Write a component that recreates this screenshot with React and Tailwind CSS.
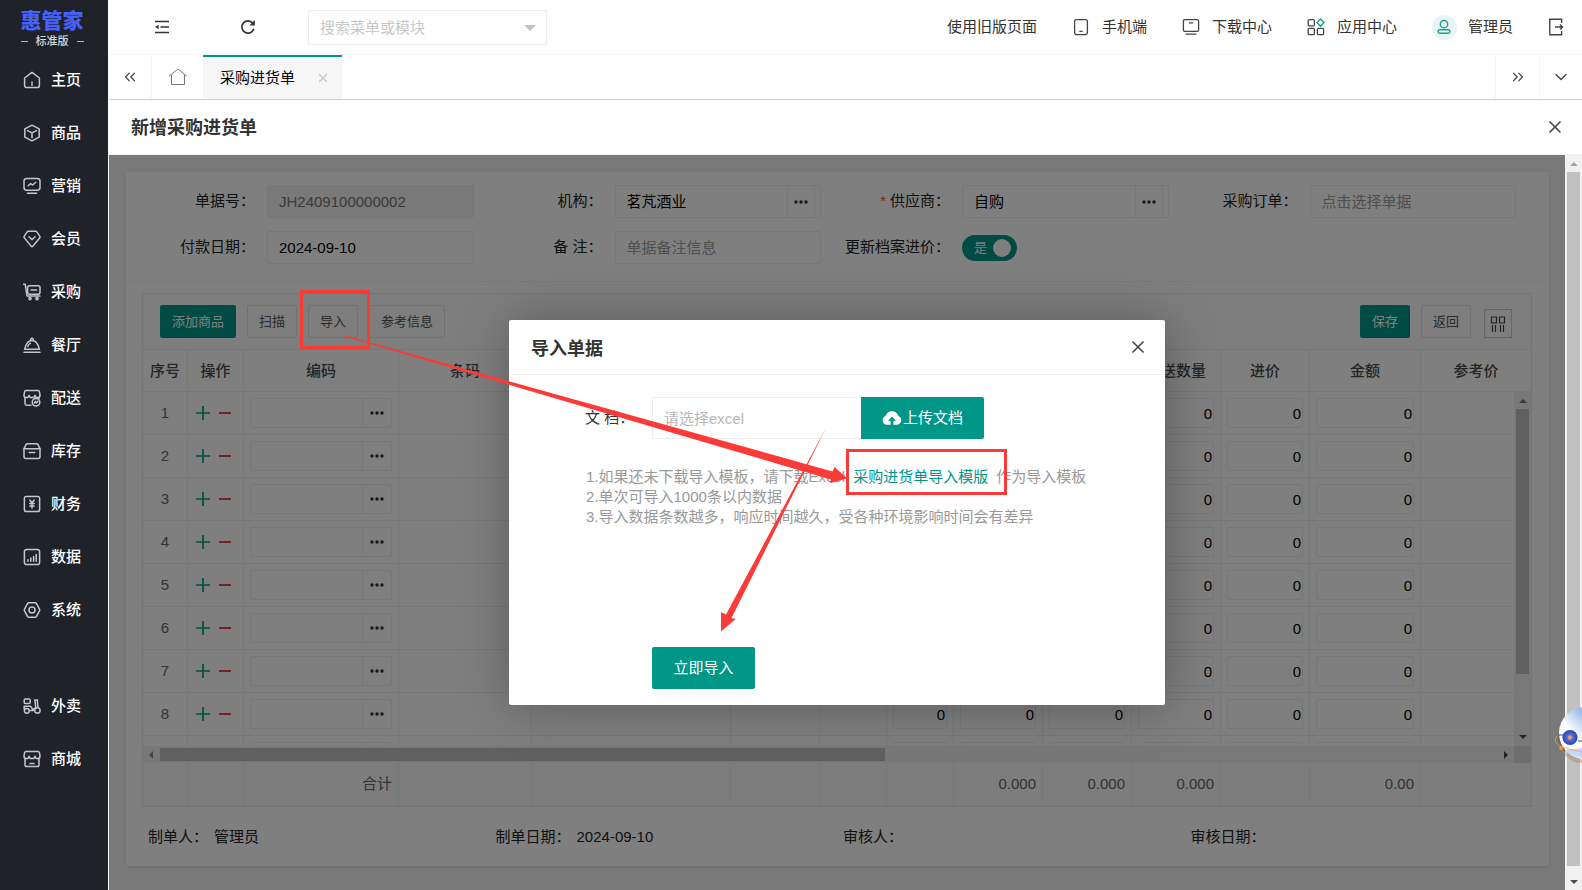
import { useState } from 'react';
import { X, ChevronsLeft, ChevronsRight, ChevronDown } from 'lucide-react';

const menuIcons = {
    home: (
        <>
            <path d="M9 1.4L16.4 7v7.4a2.2 2.2 0 0 1-2.2 2.2H3.8a2.2 2.2 0 0 1-2.2-2.2V7z" />
            <path d="M9 11v3.2" />
        </>
    ),
    goods: (
        <>
            <path d="M9 1.2l7.2 3.7v8.2L9 16.8l-7.2-3.7V4.9z" />
            <path d="M4.6 6.6L9 8.8l4.4-2.2M9 8.8v5" />
        </>
    ),
    marketing: (
        <>
            <rect x="1" y="1.4" width="16" height="11.8" rx="2.6" />
            <path d="M5.2 8.8l2.4-2.2 2 1.4 3.2-2.8M4.4 16.2h9.2" />
        </>
    ),
    member: (
        <>
            <path d="M5.4 1.2h7.2a1.5 1.5 0 0 1 1.2.6l2.9 4.3a1.5 1.5 0 0 1-.1 1.8L9.8 16.3a1 1 0 0 1-1.6 0L1.4 7.9a1.5 1.5 0 0 1-.1-1.8l2.9-4.3a1.5 1.5 0 0 1 1.2-.6z" />
            <path d="M6 6.8l3 3 3-3" />
        </>
    ),
    purchase: (
        <>
            <path d="M.6 1.2h1.6L4 13h13" />
            <rect x="4.6" y="2.8" width="12.4" height="8.4" rx="2" />
            <path d="M8 7h5.6" />
            <circle cx="7" cy="15.6" r="1.1" />
            <circle cx="14" cy="15.6" r="1.1" />
        </>
    ),
    dining: (
        <>
            <path d="M1.6 13.2C3 7.4 5.4 4.4 9 4.4s6 3 7.4 8.8z" />
            <path d="M1 16.2h16M7.8 4a1.3 1.3 0 1 1 2.4 0M4.8 10.4c.6-1.6 1.4-2.6 2.6-3.2" />
        </>
    ),
    delivery: (
        <>
            <path d="M8 16.2H3.6a1.6 1.6 0 0 1-1.6-1.6V8.6M16 8.6v.8" />
            <path d="M3 1.4h12a1.4 1.4 0 0 1 1.4 1.2l.6 3.6c0 1.4-.9 2.4-2.3 2.4s-2.7-1-2.7-2.4c0 1.4-1.4 2.4-3 2.4S6 7.6 6 6.2C6 7.6 4.7 8.6 3.3 8.6S1 7.6 1 6.2l.6-3.6A1.4 1.4 0 0 1 3 1.4z" />
            <circle cx="13" cy="13.2" r="3.8" />
            <path d="M11.2 14l1.4-1.6.8 1.6 1.4-1.6" />
        </>
    ),
    stock: (
        <>
            <path d="M4.4 1.8h9.2a1.6 1.6 0 0 1 1.4.9L17 6.6v8a1.8 1.8 0 0 1-1.8 1.8H2.8A1.8 1.8 0 0 1 1 14.6v-8l2-3.9a1.6 1.6 0 0 1 1.4-.9z" />
            <path d="M1 6.8h16M6.2 10.6h5.6" />
        </>
    ),
    finance: (
        <>
            <rect x="1.4" y="1.4" width="15.2" height="15.2" rx="1.8" />
            <path d="M6.8 5l2.2 3 2.2-3M9 8v5M6.8 8.6h4.4M6.8 10.9h4.4" />
        </>
    ),
    data: (
        <>
            <rect x="1.4" y="1.4" width="15.2" height="15.2" rx="2.4" />
            <path d="M5 11.8v1.4M7.8 10v3.2M10.6 8.4v4.8M13.2 6.4v6.8" />
        </>
    ),
    system: (
        <>
            <path d="M5.6 1.8h6.8a1.2 1.2 0 0 1 1 .6l3.2 6a1.2 1.2 0 0 1 0 1.2l-3.2 6a1.2 1.2 0 0 1-1 .6H5.6a1.2 1.2 0 0 1-1-.6l-3.2-6a1.2 1.2 0 0 1 0-1.2l3.2-6a1.2 1.2 0 0 1 1-.6z" />
            <circle cx="9" cy="9" r="3" />
        </>
    ),
    takeout: (
        <>
            <rect x="1.2" y="2" width="6" height="4.4" rx="1.2" />
            <path d="M1 9.2h6.6l2.4 3.6 2.8-2.6-1-7.2h2.8M7 13.4h3.4M14.2 3l.8 7M1.2 9.2v3" />
            <circle cx="3.8" cy="13.8" r="2.4" />
            <circle cx="14.4" cy="13.4" r="2.7" />
        </>
    ),
    mall: (
        <>
            <path d="M2 8.4v6.4a1.8 1.8 0 0 0 1.8 1.8h10.4a1.8 1.8 0 0 0 1.8-1.8V8.4" />
            <path d="M3 1.4h12a1.4 1.4 0 0 1 1.4 1.2l.6 3.6c0 1.4-.9 2.4-2.3 2.4S12 7.6 12 6.2c0 1.4-1.4 2.4-3 2.4S6 7.6 6 6.2c0 1.4-1.3 2.4-2.7 2.4S1 7.6 1 6.2l.6-3.6A1.4 1.4 0 0 1 3 1.4z" />
            <path d="M7 13.4h4" />
        </>
    ),
};

const mainMenu = [
    { label: '主页', icon: 'home' },
    { label: '商品', icon: 'goods' },
    { label: '营销', icon: 'marketing' },
    { label: '会员', icon: 'member' },
    { label: '采购', icon: 'purchase' },
    { label: '餐厅', icon: 'dining' },
    { label: '配送', icon: 'delivery' },
    { label: '库存', icon: 'stock' },
    { label: '财务', icon: 'finance' },
    { label: '数据', icon: 'data' },
    { label: '系统', icon: 'system' },
];

const extraMenu = [
    { label: '外卖', icon: 'takeout' },
    { label: '商城', icon: 'mall' },
];

const MenuItem = ({ item }) => (
    <li>
        <a href="#" className="flex h-[53px] items-center gap-[10px] pl-[23px] font-medium text-white">
            <svg viewBox="0 0 18 18" className="h-[18px] w-[18px]" fill="none" stroke="#c4c6cb" strokeWidth="1.5" strokeLinecap="round" strokeLinejoin="round">
                {menuIcons[item.icon]}
            </svg>
            {item.label}
        </a>
    </li>
);

const Sidebar = () => (
    <aside className="w-[108px] shrink-0 overflow-hidden bg-[#20222a]">
        <div className="flex h-[53px] flex-col items-center pt-[10px] pr-[4px]">
            <div className="text-[21px] leading-[22px] font-black text-[#4561f8]">惠管家</div>
            <div className="mt-[2px] flex items-center gap-2 text-[11px] leading-[14px] font-medium text-[#d5d6d8]">
                <span className="h-px w-[7px] bg-[#b5b6b9]" />
                标准版
                <span className="h-px w-[7px] bg-[#b5b6b9]" />
            </div>
        </div>
        <nav>
            <ul>{mainMenu.map((item) => <MenuItem key={item.label} item={item} />)}</ul>
            <ul className="mt-[43px]">{extraMenu.map((item) => <MenuItem key={item.label} item={item} />)}</ul>
        </nav>
    </aside>
);

const TopBar = () => (
    <header className="flex h-[55px] items-center border-b border-[#f6f6f6] pr-[18px] text-[#333]">
        <button aria-label="折叠菜单" className="ml-[45px]">
            <svg viewBox="0 0 16 16" className="h-4 w-4" fill="none" stroke="#333" strokeWidth="1.5">
                <path d="M1 2.5h14M6.5 8H15M1 13.5h14" />
                <path d="M1 8l3.600-2.200v4.400z" fill="#333" stroke="none" />
            </svg>
        </button>
        <button aria-label="刷新" className="ml-[70px]">
            <svg viewBox="0 0 16 16" className="h-4 w-4" fill="none" stroke="#333" strokeWidth="1.7">
                <path d="M13.8 9.8A6.1 6.1 0 1 1 13 4.600" />
                <path d="M14.8 1v5.4H9.4z" fill="#333" stroke="none" />
            </svg>
        </button>
        <div className="relative ml-[52px] w-[239px]">
            <input aria-label="搜索菜单或模块" placeholder="搜索菜单或模块" className="h-[35px] w-full border border-[#eee] pl-[11px] outline-none placeholder:text-[#c8c8c8]" />
            <span className="absolute top-[15px] right-[11px] border-x-[6px] border-t-[6px] border-x-transparent border-t-[#c2c2c2]" />
        </div>
        <div className="ml-auto flex items-center gap-[35px]">
            <a href="#">使用旧版页面</a>
            <a href="#" className="flex items-center gap-3">
                <svg viewBox="0 0 18 18" className="h-[18px] w-[18px]" fill="none" stroke="#444" strokeWidth="1.3">
                    <rect x="2.6" y="1.6" width="12.8" height="15" rx="1.8" />
                    <path d="M7.4 13.4h3.2" />
                </svg>
                手机端
            </a>
            <a href="#" className="flex items-center gap-3">
                <svg viewBox="0 0 18 18" className="h-[18px] w-[18px]" fill="none" stroke="#444" strokeWidth="1.3">
                    <rect x="1.4" y="1.6" width="15.2" height="11.8" rx="1.6" />
                    <path d="M7 4.8h4M3.6 16.2h10.8" />
                </svg>
                下载中心
            </a>
            <a href="#" className="flex items-center gap-3">
                <svg viewBox="0 0 18 18" className="h-[18px] w-[18px]" fill="none" stroke="#444" strokeWidth="1.3">
                    <rect x="1.2" y="1.6" width="6.2" height="6.2" rx="1.2" />
                    <rect x="1.2" y="10.4" width="6.2" height="6.2" rx="1.2" />
                    <rect x="10.4" y="10.4" width="6.2" height="6.2" rx="1.2" />
                    <path d="M13.5 1l3.500 3.600-3.500 3.600L10 4.600z" stroke="#009688" strokeLinejoin="round" />
                </svg>
                应用中心
            </a>
            <a href="#" className="flex items-center gap-[11px]">
                <span className="flex h-[25px] w-[25px] items-center justify-center rounded-full bg-[#e9f5f4]">
                    <svg viewBox="0 0 16 16" className="h-4 w-4" fill="none" stroke="#1fa093" strokeWidth="1.4">
                        <circle cx="8" cy="5.2" r="3.7" />
                        <rect x="2" y="10.8" width="12" height="3.4" rx="1.7" />
                    </svg>
                </span>
                管理员
            </a>
            <button aria-label="退出">
                <svg viewBox="0 0 16 20" className="h-5 w-4" fill="none" stroke="#444" strokeWidth="1.4">
                    <path d="M13.6 6V2.2H1.8v15.6h11.8V14M7 10h7.4M12 7.4l2.600 2.600-2.600 2.600" />
                </svg>
            </button>
        </div>
    </header>
);

const TabBar = () => (
    <div className="relative z-10 flex h-[44px] bg-white shadow-[0_1px_1px_rgba(0,0,0,0.18)]">
        <button aria-label="向左滚动" className="flex w-[43px] items-center justify-center border-r border-[#f6f6f6]">
            <ChevronsLeft className="h-[18px] w-[18px] text-[#444]" strokeWidth={1.6} />
        </button>
        <button aria-label="首页" className="flex w-[51px] items-center justify-center">
            <svg viewBox="0 0 20 20" className="h-5 w-5" fill="none" stroke="#777" strokeWidth="1">
                <path d="M1 9.2L10 2l9 7.200M3.500 8v9.500h13V8" />
            </svg>
        </button>
        <div className="flex w-[139px] items-center justify-between border-t-2 border-[#009688] bg-[#f6f6f6] pr-3 pl-[17px] text-black">
            采购进货单
            <button aria-label="关闭标签">
                <X className="h-[14px] w-[14px] text-[#c4c4c4]" strokeWidth={2} />
            </button>
        </div>
        <button aria-label="向右滚动" className="ml-auto flex w-[44px] items-center justify-center border-l border-[#f6f6f6]">
            <ChevronsRight className="h-[18px] w-[18px] text-[#444]" strokeWidth={1.6} />
        </button>
        <button aria-label="更多标签" className="flex w-[43px] items-center justify-center border-l border-[#f6f6f6]">
            <ChevronDown className="h-[20px] w-[20px] text-[#444]" strokeWidth={1.6} />
        </button>
    </div>
);

const Dots = () => (
    <svg viewBox="0 0 14 4" className="h-1 w-[14px]" fill="#333">
        <circle cx="2" cy="2" r="1.7" />
        <circle cx="7" cy="2" r="1.7" />
        <circle cx="12" cy="2" r="1.7" />
    </svg>
);

const Field = ({ id, label, required, children }) => (
    <div className="flex h-[33px] items-center pr-4">
        <label htmlFor={id} className="w-[125px] shrink-0 pr-[12px] pb-[2px] text-right text-[#222]">
            {required && <span className="mr-1 text-[#ff5722]">*</span>}
            {label}
        </label>
        {children}
    </div>
);

const inputClass = 'h-full w-full min-w-0 rounded-xs border border-[#eee] px-[11px] text-black outline-none placeholder:text-[#a0a0a0]';

const PickerInput = ({ id, value }) => (
    <div className="flex h-full w-full min-w-0 rounded-xs border border-[#eee] pr-[5px]">
        <input id={id} defaultValue={value} className="w-full min-w-0 pl-[11px] text-black outline-none" />
        <button aria-label="选择" className="flex w-[28px] shrink-0 items-center justify-center border-x border-[#eee]">
            <Dots />
        </button>
    </div>
);

const OrderForm = () => {
    const [updatePrice, setUpdatePrice] = useState(true);

    return (
        <form className="grid grid-cols-4 gap-y-[13px] border-b border-[#f2f2f2] pt-[13px] pr-[17px] pb-[17px] pl-4">
            <Field id="billNo" label="单据号：">
                <input id="billNo" readOnly defaultValue="JH2409100000002" className="h-full w-full min-w-0 rounded-xs border border-[#eee] bg-[#f2f2f2] px-[11px] text-[#777] outline-none" />
            </Field>
            <Field id="org" label="机构：">
                <PickerInput id="org" value="茗芃酒业" />
            </Field>
            <Field id="supplier" label="供应商：" required>
                <PickerInput id="supplier" value="自购" />
            </Field>
            <Field id="order" label="采购订单：">
                <input id="order" placeholder="点击选择单据" className={inputClass} />
            </Field>
            <Field id="payDate" label="付款日期：">
                <input id="payDate" defaultValue="2024-09-10" className={inputClass} />
            </Field>
            <Field id="remark" label="备 注：">
                <input id="remark" placeholder="单据备注信息" className={inputClass} />
            </Field>
            <Field id="updatePrice" label="更新档案进价：">
                <label className="flex h-[26px] w-[55px] items-center justify-between rounded-full bg-[#009688] pr-[6px] pl-3 text-[13px] text-white">
                    <input id="updatePrice" type="checkbox" className="sr-only" checked={updatePrice} onChange={() => setUpdatePrice(!updatePrice)} />
                    {updatePrice ? '是' : '否'}
                    <span className="h-[18px] w-[18px] rounded-full bg-white" />
                </label>
            </Field>
        </form>
    );
};

// the last column takes whatever width is left
const Columns = () => (
    <colgroup>
        <col className="w-[45px]" />
        <col className="w-[56px]" />
        <col className="w-[155px]" />
        <col className="w-[133px]" />
        <col className="w-[199px]" />
        <col className="w-[89px]" />
        <col className="w-[67px]" />
        <col className="w-[67px]" />
        <col className="w-[89px]" />
        <col className="w-[89px]" />
        <col className="w-[89px]" />
        <col className="w-[89px]" />
        <col className="w-[111px]" />
        <col />
    </colgroup>
);

const headers = ['序号', '操作', '编码', '条码', '', '', '', '', '', '', '赠送数量', '进价', '金额', '参考价'];
const totals = ['', '', '合计', '', '', '', '', '', '0.000', '0.000', '0.000', '', '0.00', ''];
// the trailing blank row peeks out above the scrollbar
const rows = [1, 2, 3, 4, 5, 6, 7, 8, ''];
const numberCells = ['qty', 'count', 'stock', 'gift', 'price', 'amount'];

const tableClass = 'w-full table-fixed border-separate border-spacing-0';
const cellClass = 'border-r border-b border-[#eee]';
const ghostButton = 'h-[33px] rounded-xs border border-[#e2e2e2] px-[11px] text-[13px] text-[#555]';
const primaryButton = 'h-[33px] rounded-xs bg-[#009688] px-3 text-[13px] text-white';

const GoodsRow = ({ no }) => (
    <tr className="h-[43px]">
        <td className={`${cellClass} text-center text-[#666]`}>{no}</td>
        <td className={cellClass}>
            <div className="flex items-center gap-2 pl-[7px]">
                <button aria-label="增加一行">
                    <svg viewBox="0 0 16 16" className="h-4 w-4" stroke="#009e7c" strokeWidth="1.7"><path d="M1 8h14M8 1v14" /></svg>
                </button>
                <button aria-label="删除一行">
                    <svg viewBox="0 0 12 16" className="h-4 w-3" stroke="#e0262e" strokeWidth="1.7"><path d="M0 8h12" /></svg>
                </button>
            </div>
        </td>
        <td className={`${cellClass} px-[6px]`}>
            <div className="flex h-[30px] rounded-xs border border-[#eee]">
                <input aria-label={`编码 ${no}`} className="w-full min-w-0 px-1 outline-none" />
                <button aria-label="选择商品" className="flex w-[29px] shrink-0 items-center justify-center border-l border-[#eee]">
                    <Dots />
                </button>
            </div>
        </td>
        <td className={cellClass} />
        <td className={cellClass} />
        <td className={cellClass} />
        <td className={cellClass} />
        {numberCells.map((name) => (
            <td key={name} className={`${cellClass} px-[6px]`}>
                <input aria-label={`${name} ${no}`} defaultValue={no ? '0' : ''} className="block h-[30px] w-full rounded-xs border border-[#eee] pr-px text-right text-black outline-none" />
            </td>
        ))}
        <td className="border-b border-[#eee]" />
    </tr>
);

const GoodsTable = () => (
    <section className="mt-[11px] mr-[17px] ml-4 border border-[#eaeaea]">
        <div className="flex items-center gap-[11px] border-b border-[#eee] bg-[#fdfdfd] py-[11px] pr-[19px] pl-[17px]">
            <button className={primaryButton}>添加商品</button>
            <button className={ghostButton}>扫描</button>
            <button className={ghostButton}>导入</button>
            <button className={ghostButton}>参考信息</button>
            <button className="ml-auto h-[33px] rounded-xs bg-[#009688] px-3 text-[13px] text-white">保存</button>
            <button className={ghostButton}>返回</button>
            <button aria-label="筛选列" className="ml-[2px] flex h-[29px] w-[28px] items-center justify-center self-end border border-[#ccc]">
                <svg viewBox="0 0 16 16" className="h-4 w-4" fill="none" stroke="#444" strokeWidth="1.2">
                    <path d="M1.5 1h5v6h-5zM9.5 1h5v6h-5zM2.5 9v7M5.5 9v7M10.5 9v7M13.5 9v7" />
                </svg>
            </button>
        </div>
        <table className={tableClass}>
            <Columns />
            <thead>
                <tr className="h-[42px]">
                    {headers.map((text, i) => (
                        <th key={i} className={`${cellClass} font-medium text-[#4a4a4a] last:border-r-0`}>{text}</th>
                    ))}
                </tr>
            </thead>
        </table>
        <div className="flex h-[354px] overflow-hidden">
            <div className="min-w-0 flex-1">
                <table className={tableClass}>
                    <Columns />
                    <tbody>{rows.map((no) => <GoodsRow key={no} no={no} />)}</tbody>
                </table>
            </div>
            <div className="flex w-[17px] shrink-0 flex-col items-center bg-[#f1f1f1] py-[7px]">
                <span className="border-x-4 border-b-4 border-x-transparent border-b-[#777]" />
                <span className="mt-[6px] h-[265px] w-[13px] bg-[#c1c1c1]" />
                <span className="mt-auto border-x-4 border-t-4 border-x-transparent border-t-[#444]" />
            </div>
        </div>
        <div className="flex h-[17px] bg-[#dcdcdc] pr-[17px]">
            <div className="flex flex-1 items-center bg-[#f1f1f1] px-[6px]">
                <span className="border-y-4 border-r-4 border-y-transparent border-r-[#888]" />
                <span className="ml-[7px] h-[13px] w-8/15 bg-[#c1c1c1]" />
                <span className="ml-auto border-y-4 border-l-4 border-y-transparent border-l-[#444]" />
            </div>
        </div>
        <table className={`${tableClass} bg-[#fafafa]`}>
            <Columns />
            <tbody>
                <tr className="h-[43px]">
                    {totals.map((text, i) => (
                        <td key={i} className={`${cellClass} pr-[6px] text-right text-[#666] last:border-r-0`}>{text}</td>
                    ))}
                </tr>
            </tbody>
        </table>
    </section>
);

const BillFooter = () => (
    <dl className="mr-[17px] ml-4 grid h-[59px] grid-cols-4 items-center text-[#222]">
        <div className="flex gap-[6px] pl-[6px]"><dt>制单人：</dt><dd>管理员</dd></div>
        <div className="flex gap-[6px] pl-[6px]"><dt>制单日期：</dt><dd>2024-09-10</dd></div>
        <div className="flex gap-[6px] pl-[6px]"><dt>审核人：</dt></div>
        <div className="flex gap-[6px] pl-[6px]"><dt>审核日期：</dt></div>
    </dl>
);

const ImportDialog = () => (
    <div role="dialog" aria-label="导入单据" className="w-[656px] rounded-xs bg-white pb-4 shadow-[1px_1px_50px_rgba(0,0,0,0.3)]">
        <div className="flex h-[55px] items-center justify-between border-b border-[#f0f0f0] pr-[17px] pl-[22px]">
            <h2 className="pt-[3px] text-[18px] font-bold text-[#333]">导入单据</h2>
            <button aria-label="关闭">
                <X className="h-5 w-5 text-[#444450]" strokeWidth={2} />
            </button>
        </div>
        <div className="flex h-[64px] items-center pt-[22px] pl-[76px]">
            <label htmlFor="file" className="w-[67px] text-[#333]">文 档：</label>
            <input id="file" placeholder="请选择excel" className="h-[42px] w-[209px] rounded-l-xs border border-r-0 border-[#eee] px-[11px] outline-none placeholder:text-[#b8b8b8]" />
            <button className="flex h-[42px] w-[123px] items-center justify-center rounded-r-xs bg-[#009688] text-white">
                <svg viewBox="0 0 20 16" className="mr-px h-4 w-5">
                    <path d="M5 14.8a4.5 4.5 0 0 1-1.4-8.7A6.6 6.6 0 0 1 16.3 6 4.6 4.6 0 0 1 15.2 14.8z" fill="#fff" />
                    <path d="M10 6.4l-4 4.4h2.6v4.8h2.8v-4.8H14z" fill="#009688" />
                </svg>
                上传文档
            </button>
        </div>
        <ol className="mt-[28px] ml-[77px] leading-5 text-[#999]">
            <li>
                1.如果还未下载导入模板，请下载Excel
                <a href="#" className="mx-2 text-[#009688]">采购进货单导入模版</a>
                作为导入模板
            </li>
            <li>2.单次可导入1000条以内数据</li>
            <li>3.导入数据条数越多，响应时间越久，受各种环境影响时间会有差异</li>
        </ol>
        <button className="mt-[120px] ml-[143px] block h-[42px] w-[103px] rounded-xs bg-[#009688] text-white">立即导入</button>
    </div>
);

const PageScrollbar = () => (
    <div className="flex w-[17px] shrink-0 flex-col items-center bg-[#f1f1f1] pt-[7px] pb-[6px]">
        <span className="border-x-4 border-b-4 border-x-transparent border-b-[#a3a3a3]" />
        <span className="mt-[6px] w-[13px] flex-1 bg-[#c1c1c1]" />
        <span className="mt-[14px] border-x-4 border-t-4 border-x-transparent border-t-[#505050]" />
    </div>
);

const Assistant = () => (
    <svg viewBox="0 0 30 60" className="absolute right-0 bottom-[127px] z-30 h-[60px] w-[30px]">
        <defs>
            <linearGradient id="ball" x1="0" y1="0.6" x2="0.6" y2="0">
                <stop offset="0.3" stopColor="#ffffff" />
                <stop offset="1" stopColor="#6f9fe6" />
            </linearGradient>
            <radialGradient id="eye">
                <stop offset="0" stopColor="#6f8cf0" />
                <stop offset="1" stopColor="#2b3fb0" />
            </radialGradient>
        </defs>
        <ellipse cx="33" cy="35" rx="27" ry="26" fill="#000" opacity="0.12" />
        <circle cx="33" cy="30" r="26" fill="url(#ball)" />
        <path d="M13 47c5 5 10 7 17 8V45z" fill="#a9c6f2" opacity="0.7" />
        <path d="M7 32h6M26 38h4" stroke="#2c46a8" strokeWidth="1" />
        <circle cx="18" cy="34.5" r="7.6" fill="url(#eye)" />
        <circle cx="18" cy="34.5" r="2" fill="#f5a04a" />
        <path d="M5 33c-5 7 0 11 25 16M9 45c3 8 12 12 21 13" fill="none" stroke="#f0a050" strokeWidth="0.8" />
        <circle cx="9" cy="45" r="1.9" fill="#f5983a" />
    </svg>
);

// red guide marks: import button -> template link, then down to the submit button
const GuideMarks = () => (
    <svg viewBox="0 0 1582 890" className="pointer-events-none absolute top-0 left-0 z-40 h-[890px] w-[1582px]" fill="none">
        <rect x="301.5" y="291.5" width="67" height="56" stroke="#fc3a38" strokeWidth="3" />
        <rect x="847.5" y="450.5" width="158" height="43" stroke="#fc3a38" strokeWidth="3" />
        <path d="M343 334.8L832.5 471.5 834.6 467 847 478.3 830 483.3 831 479.5 343 336z" fill="#fc3a38" />
        <path d="M826 428L731.5 618 735.7 619 721 631.5 721 612 726 614.5z" fill="#fc3a38" />
    </svg>
);

const App = () => (
    <div className="relative flex h-screen overflow-hidden bg-white font-['Liberation_Sans','Noto_Sans_CJK_SC',sans-serif] text-[15px] leading-[22px]">
        <Sidebar />
        <div className="ml-px flex min-w-0 flex-1 flex-col">
            <TopBar />
            <TabBar />
            <div className="flex h-14 shrink-0 items-center justify-between border-b border-[#f0f0f0] pr-[17px] pl-[22px]">
                <h1 className="pt-[3px] text-[18px] font-bold text-[#333]">新增采购进货单</h1>
                <button aria-label="关闭页面">
                    <X className="h-5 w-5 text-[#444450]" strokeWidth={2} />
                </button>
            </div>
            <div className="flex min-h-0 flex-1">
                <main className="relative min-w-0 flex-1 overflow-hidden bg-[#f2f2f2] pt-[17px] pr-4 pl-[17px]">
                    <div className="rounded-xs bg-white shadow-sm">
                        <OrderForm />
                        <GoodsTable />
                        <BillFooter />
                    </div>
                    {/* Modal mask */}
                    <div className="absolute inset-0 z-20 flex items-center justify-center bg-black/50 pb-5">
                        <ImportDialog />
                    </div>
                </main>
                <PageScrollbar />
            </div>
        </div>
        <Assistant />
        <GuideMarks />
    </div>
);

export default App;
